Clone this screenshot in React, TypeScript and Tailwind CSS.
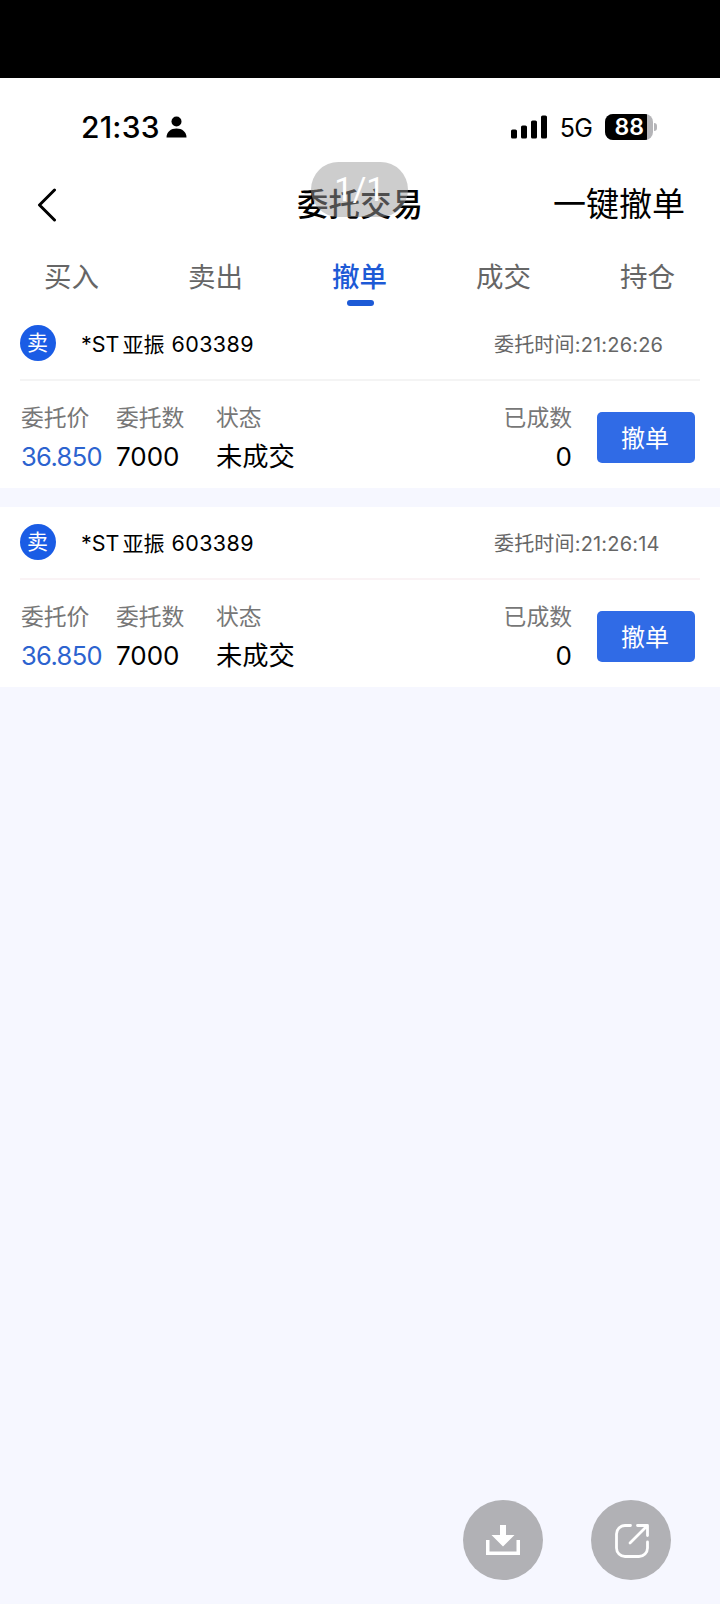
interface Order {
  id: number
  name: string
  code: string
  time: string
  price: string
  amount: string
  status: string
  filled: string
  lineClass: string
}

const TABS = ['买入', '卖出', '撤单', '成交', '持仓']

const ORDERS: Order[] = [
  {
    id: 1,
    name: '亚振',
    code: '603389',
    time: '21:26:26',
    price: '36.850',
    amount: '7000',
    status: '未成交',
    filled: '0',
    lineClass: 'bg-[#f4f4f4]',
  },
  {
    id: 2,
    name: '亚振',
    code: '603389',
    time: '21:26:14',
    price: '36.850',
    amount: '7000',
    status: '未成交',
    filled: '0',
    lineClass: 'bg-[#faf3f5]',
  },
]

function StatusBar() {
  return (
    <div className="flex h-[98px] items-center pl-[81px] pr-[63px]">
      <span className="text-[30px] font-medium leading-none tracking-[0.2px]">21:33</span>
      <svg className="ml-[6px]" width="21" height="22" viewBox="0 0 21 22">
        <circle cx="10.5" cy="5.5" r="5" />
        <path d="M0.5 21.5C0.5 16 4.8 12.6 10.5 12.6S20.5 16 20.5 21.5Z" />
      </svg>
      <svg className="ml-auto" width="37" height="24" viewBox="0 0 37 24">
        <rect x="0" y="14.5" width="6" height="9" rx="1.6" />
        <rect x="10" y="10.5" width="6" height="13" rx="1.6" />
        <rect x="20" y="5.5" width="6" height="18" rx="1.6" />
        <rect x="30" y="0.5" width="6" height="23" rx="1.6" />
      </svg>
      <span className="ml-[12px] pt-[2px] text-[25px] leading-none tracking-[-0.8px]">5G</span>
      <div className="ml-[13px] flex h-[26px] w-[48px] overflow-hidden rounded-[8px] bg-[#b5b5b8]">
        <div className="flex w-[42px] items-center justify-end bg-black pr-[3px]">
          <span className="text-[23px] font-semibold leading-none text-white">88</span>
        </div>
      </div>
      <div className="ml-[1px] h-[8px] w-[3px] rounded-r-full bg-[#b5b5b8]" />
    </div>
  )
}

function Header() {
  return (
    <div className="flex h-[56px] items-center">
      <div className="flex flex-1 pl-[37px] pt-[2px]">
        <svg width="20" height="34" viewBox="0 0 20 34" fill="none" stroke="black" strokeWidth="3">
          <path d="M17.5 2L2.5 17L17.5 32" strokeLinecap="round" strokeLinejoin="round" />
        </svg>
      </div>
      <h1 className="mr-[2px] pt-[2px] text-[31.5px] font-medium leading-none">委托交易</h1>
      <div className="flex flex-1 justify-end pr-[35px]">
        <button type="button" className="text-[33px] leading-none">
          一键撤单
        </button>
      </div>
    </div>
  )
}

function Tabs() {
  return (
    <div className="grid h-[76px] grid-cols-5">
      {TABS.map((tab) => (
        <button
          key={tab}
          type="button"
          className={`flex flex-col items-center pt-[32px] text-[27.5px] leading-none ${
            tab === '撤单' ? 'font-medium text-[#1d5ad6]' : 'text-[#666]'
          }`}
        >
          <span className="-ml-[1px] h-[28px] leading-none">{tab}</span>
          {tab === '撤单' && <span className="mt-[8px] h-[6px] w-[27px] rounded-full bg-[#1d5ad6]" />}
        </button>
      ))}
    </div>
  )
}

function OrderCard({ order }: { order: Order }) {
  return (
    <div className="h-[180px] bg-white px-5">
      <div className="flex h-[71px] items-center">
        <span className="mb-[2px] flex size-[36px] items-center justify-center rounded-full bg-[#1a5ce5] pb-[1px] pr-[1px] text-[21px] leading-none text-white">
          卖
        </span>
        <div className="flex pl-[25px] pt-[3px] text-[21.5px] leading-none">
          <span>*ST</span>
          <span className="ml-[3px] mr-[7px] text-[21px]">{order.name}</span>
          <span className="tracking-[0.4px]">{order.code}</span>
        </div>
        <div className="ml-auto w-[206px] pt-[2px] text-[20px] leading-none tracking-[0.18px] text-[#666]">
          委托时间:{order.time}
        </div>
      </div>
      <div className={`h-[2px] ${order.lineClass}`} />
      <div className="flex h-[102px] pl-[1px] pt-[26px] leading-none">
        <div className="flex w-[95px] flex-col gap-[14px]">
          <span className="text-[22.8px] text-[#777]">委托价</span>
          <span className="text-[25.5px] tracking-[-0.65px] text-[#2c63cf]">{order.price}</span>
        </div>
        <div className="flex w-[100px] flex-col gap-[14px]">
          <span className="text-[22.8px] text-[#777]">委托数</span>
          <span className="text-[26px]">{order.amount}</span>
        </div>
        <div className="flex flex-1 flex-col gap-[14px]">
          <span className="text-[22.8px] text-[#777]">状态</span>
          <span className="text-[26.3px]">{order.status}</span>
        </div>
        <div className="flex flex-col items-end gap-[14px]">
          <span className="text-[22.8px] text-[#777]">已成数</span>
          <span className="text-[26px]">{order.filled}</span>
        </div>
        <button
          type="button"
          className="ml-[25px] mr-[5px] mt-[5px] h-[51px] w-[98px] rounded-[5px] bg-[#306be6] pr-[2px] pt-[2px] text-[24px] leading-none text-white"
        >
          撤单
        </button>
      </div>
    </div>
  )
}

export default function App() {
  return (
    <div className="relative flex h-[1604px] w-[720px] flex-col overflow-hidden bg-[#f6f7ff] font-['Inter','Noto_Sans_CJK_SC',sans-serif] text-black">
      <div className="h-[78px] bg-black" />
      <div className="bg-white">
        <StatusBar />
        <Header />
        <Tabs />
      </div>
      <div className="flex flex-col gap-[19px]">
        {ORDERS.map((order) => (
          <OrderCard key={order.id} order={order} />
        ))}
      </div>

      {/* viewer overlay */}
      <div className="absolute left-[311px] top-[162px] flex h-[55px] w-[97px] items-center justify-center rounded-full bg-[#9c9c9c]/50 font-['Roboto',sans-serif] text-[33px] leading-none text-white">
        1/1
      </div>
      <div className="absolute bottom-[24px] right-[49px] flex gap-[48px]">
        <button type="button" className="flex size-[80px] items-center justify-center rounded-full bg-[#b1b1b5]">
          <svg width="80" height="80" viewBox="0 0 80 80" fill="white">
            <path d="M37 25H43V35H51.5L40 46.5L28.5 35H37Z" />
            <path d="M23 40H26.5V51.5H53.5V40H57V55H23Z" />
          </svg>
        </button>
        <button type="button" className="flex size-[80px] items-center justify-center rounded-full bg-[#b1b1b5]">
          <svg width="80" height="80" viewBox="0 0 80 80" fill="none" stroke="white" strokeWidth="2.8">
            <path d="M39.5 25.5H34A8.5 8.5 0 0 0 25.5 34V48A8.5 8.5 0 0 0 34 56.5H48A8.5 8.5 0 0 0 56.5 48V42" strokeLinecap="round" />
            <path d="M46.5 25.5H56.5V35.5M56 26L39 43" strokeLinecap="round" strokeLinejoin="round" />
          </svg>
        </button>
      </div>
    </div>
  )
}
